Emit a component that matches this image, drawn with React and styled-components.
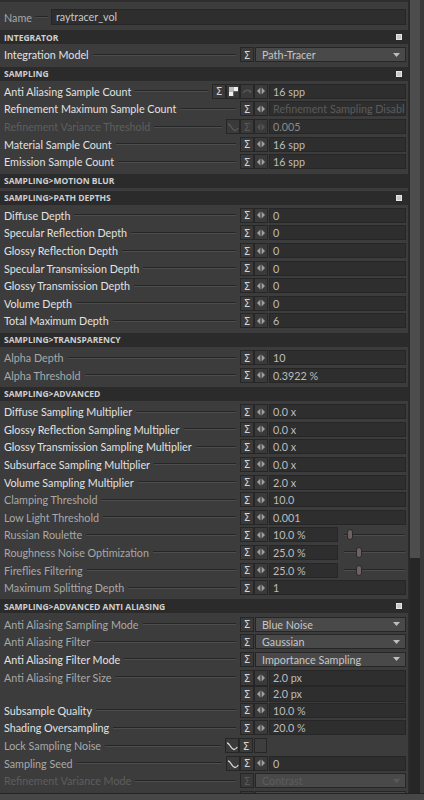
import React from 'react';
import styled, { createGlobalStyle } from 'styled-components';

const GlobalStyle = createGlobalStyle`
  html, body {
    margin: 0;
    padding: 0;
    background: #3c3c3c;
  }
  body {
    font-family: Lato, "Open Sans", sans-serif;
  }
`;

const tones = {
  bright: '#e2e2e2',
  mid: '#a9a9a9',
  dim: '#5e5e5e',
};

const valueTones = {
  normal: '#bdbdbd',
  soft: '#8a8a8a',
  dim: '#5b5b5b',
};

const Window = styled.div`
  width: 424px;
  height: 800px;
  display: flex;
  flex-direction: column;
  overflow: hidden;
`;

const Main = styled.div`
  display: flex;
  height: 794px;
  overflow: hidden;
`;

const Panel = styled.div`
  width: 408px;
  flex: none;
  box-sizing: border-box;
  background: #3c3c3c;
  border-top: 2px solid #2e2e2e;
  padding: 5px 2px 0 0;
`;

const ScrollTrack = styled.div`
  width: 16px;
  flex: none;
  box-sizing: border-box;
  background: #262626;
  border-left: 2px solid #2a2a2a;
  border-right: 4px solid #393939;
`;

const ScrollThumb = styled.div`
  height: 558px;
  background: #4d4d4d;
`;

const BottomBar = styled.div`
  height: 6px;
  background: #474747;
  border-top: 1px solid #232323;
`;

const NameRow = styled.div`
  display: flex;
  align-items: center;
  height: 20px;
  padding-left: 4px;
`;

const NameLabel = styled.span`
  font-size: 10.75px;
  color: #a8a8a8;
`;

const NameLeader = styled.div`
  width: 13px;
  margin: 0 3px;
  border-top: 1px solid #262626;
  border-bottom: 1px solid #4d4d4d;
`;

const NameInput = styled.div`
  flex: 1;
  height: 16px;
  box-sizing: border-box;
  border: 1px solid #262626;
  background: #2e2e2e;
  padding-left: 4px;
  font-size: 10.75px;
  line-height: 14px;
  color: #c8c8c8;
`;

const Header = styled.div`
  height: 14px;
  margin: 3px -2px 2px 0;
  padding: 0 6px 0 4px;
  background: #2b2b2b;
  display: flex;
  align-items: center;
  justify-content: space-between;
  font-family: "Open Sans", sans-serif;
  font-weight: 700;
  font-size: 8.5px;
  color: #d0d0d0;
  text-transform: uppercase;
`;

const Toggle = styled.span`
  width: 6px;
  height: 6px;
  box-sizing: border-box;
  background: #c9c9c9;
  border: 1px solid #e6e6e6;
`;

const Row = styled.div`
  display: flex;
  align-items: flex-start;
  min-height: 17.6px;
`;

const LabelArea = styled.div`
  flex: 1;
  min-width: 0;
  height: 17.6px;
  display: flex;
  align-items: center;
  padding-left: 4px;
`;

const Label = styled.span`
  font-size: 10.75px;
  white-space: nowrap;
  color: ${({ $tone }) => tones[$tone]};
`;

const Leader = styled.div`
  flex: 1;
  margin: 0 4px 0 4px;
  border-top: 1px solid #262626;
  border-bottom: 1px solid #4d4d4d;
`;

const Controls = styled.div`
  display: flex;
  flex-direction: column;
  padding-top: 1.3px;
`;

const Line = styled.div`
  display: flex;
  height: ${({ $tall }) => ($tall ? 16 : 15)}px;
`;

const Btn = styled.div`
  width: 14px;
  height: 100%;
  box-sizing: border-box;
  border: 1px solid #262626;
  background: #3a3a3a;
  display: flex;
  align-items: center;
  justify-content: center;
  font-family: "DejaVu Sans", sans-serif;
  font-size: 10.5px;
  color: ${({ $dim }) => ($dim ? '#5a5a5a' : '#d4d4d4')};
`;

const Value = styled.div`
  width: ${({ $w }) => $w}px;
  margin-left: 1px;
  box-sizing: border-box;
  border: 1px solid #262626;
  background: #2e2e2e;
  padding-left: 3px;
  font-size: 10.75px;
  line-height: 13px;
  white-space: nowrap;
  overflow: hidden;
  color: ${({ $tone }) => valueTones[$tone || 'normal']};
`;

const Drop = styled.div`
  width: 151px;
  margin-left: 1px;
  box-sizing: border-box;
  border: 1px solid #262626;
  background: #494949;
  padding: 0 5px 0 6px;
  display: flex;
  align-items: center;
  justify-content: space-between;
  font-size: 10.75px;
  white-space: nowrap;
  color: ${({ $dim }) => ($dim ? '#5c5c5c' : '#c6c6c6')};
`;

const Check = styled.div`
  width: 13px;
  margin-left: 1px;
  box-sizing: border-box;
  border: 1px solid #262626;
  background: #3e3e3e;
`;

const Spacer = styled.div`
  width: ${({ $w }) => $w}px;
`;

const Slider = styled.div`
  position: relative;
  width: 68px;
  display: flex;
  align-items: center;
`;

const Track = styled.div`
  flex: 1;
  margin: 0 1px 0 6px;
  border-top: 1px solid #262626;
  border-bottom: 1px solid #4d4d4d;
`;

const Thumb = styled.div`
  position: absolute;
  top: 2px;
  width: 6px;
  height: 11px;
  box-sizing: border-box;
  border-radius: 3px;
  border: 1px solid #2a2a2a;
  background: #6e6262;
`;

const Sigma = ({ dim }) => <Btn $dim={dim}>Σ</Btn>;

const Arrows = ({ dim }) => (
  <Btn>
    <svg width="8" height="8" viewBox="0 0 8 8">
      <g fill={dim ? '#555' : '#a0a0a0'}>
        <polygon points="0,4 3.4,0.6 3.4,7.4" />
        <polygon points="4.6,0.6 8,4 4.6,7.4" />
      </g>
    </svg>
  </Btn>
);

const Curve = ({ dim }) => (
  <Btn>
    <svg width="12" height="11" viewBox="0 0 12 11">
      <path
        d="M1 3 C3.5 2.5 5 9.5 8 9.5 C9.5 9.5 10.3 8.5 11.3 7"
        fill="none"
        stroke={dim ? '#5a5a5a' : '#d8d8d8'}
        strokeWidth="1.3"
      />
    </svg>
  </Btn>
);

const Checker = () => (
  <Btn>
    <svg width="9" height="9" viewBox="0 0 9 9">
      <rect x="0" y="0" width="4.5" height="4.5" fill="#bdbdbd" />
      <rect x="4.5" y="0" width="4.5" height="4.5" fill="#f0f0f0" />
      <rect x="0" y="4.5" width="4.5" height="4.5" fill="#f0f0f0" />
      <rect x="4.5" y="4.5" width="4.5" height="4.5" fill="#3a3a3a" />
    </svg>
  </Btn>
);

const Arc = () => (
  <Btn>
    <svg width="10" height="8" viewBox="0 0 10 8">
      <path d="M1 6 Q4 1.5 8 4" fill="none" stroke="#5a5a5a" strokeWidth="1.3" />
      <polygon points="6.5,5.5 9.5,5.5 8.5,2.5" fill="#5a5a5a" />
    </svg>
  </Btn>
);

const DropArrow = ({ dim }) => (
  <svg width="7" height="4" viewBox="0 0 7 4">
    <polygon points="0,0 7,0 3.5,4" fill={dim ? '#5a5a5a' : '#bdbdbd'} />
  </svg>
);

const buttonIcons = {
  sigma: Sigma,
  arrows: Arrows,
  checker: Checker,
  arc: Arc,
  curve: Curve,
};

const sections = [
  {
    title: 'Integrator',
    toggle: true,
    rows: [{ label: 'Integration Model', tone: 'bright', kind: 'drop', value: 'Path-Tracer' }],
  },
  {
    title: 'Sampling',
    toggle: true,
    rows: [
      {
        label: 'Anti Aliasing Sample Count',
        tone: 'bright',
        value: '16 spp',
        buttons: ['sigma', 'checker', 'arc', 'arrows'],
      },
      {
        label: 'Refinement Maximum Sample Count',
        tone: 'bright',
        value: 'Refinement Sampling Disabled',
        valueTone: 'dim',
      },
      {
        label: 'Refinement Variance Threshold',
        tone: 'dim',
        value: '0.005',
        valueTone: 'soft',
        buttons: ['curve', 'sigma', 'arrows'],
        dim: true,
      },
      { label: 'Material Sample Count', tone: 'bright', value: '16 spp' },
      { label: 'Emission Sample Count', tone: 'bright', value: '16 spp' },
    ],
  },
  { title: 'Sampling>Motion Blur', rows: [] },
  {
    title: 'Sampling>Path Depths',
    toggle: true,
    rows: [
      { label: 'Diffuse Depth', tone: 'bright', value: '0' },
      { label: 'Specular Reflection Depth', tone: 'bright', value: '0' },
      { label: 'Glossy Reflection Depth', tone: 'bright', value: '0' },
      { label: 'Specular Transmission Depth', tone: 'bright', value: '0' },
      { label: 'Glossy Transmission Depth', tone: 'bright', value: '0' },
      { label: 'Volume Depth', tone: 'bright', value: '0' },
      { label: 'Total Maximum Depth', tone: 'bright', value: '6' },
    ],
  },
  {
    title: 'Sampling>Transparency',
    rows: [
      { label: 'Alpha Depth', tone: 'mid', value: '10' },
      { label: 'Alpha Threshold', tone: 'mid', value: '0.3922 %' },
    ],
  },
  {
    title: 'Sampling>Advanced',
    rows: [
      { label: 'Diffuse Sampling Multiplier', tone: 'bright', value: '0.0 x' },
      { label: 'Glossy Reflection Sampling Multiplier', tone: 'bright', value: '0.0 x' },
      { label: 'Glossy Transmission Sampling Multiplier', tone: 'bright', value: '0.0 x' },
      { label: 'Subsurface Sampling Multiplier', tone: 'bright', value: '0.0 x' },
      { label: 'Volume Sampling Multiplier', tone: 'bright', value: '2.0 x' },
      { label: 'Clamping Threshold', tone: 'mid', value: '10.0' },
      { label: 'Low Light Threshold', tone: 'mid', value: '0.001' },
      { label: 'Russian Roulette', tone: 'mid', kind: 'slider', value: '10.0 %', pct: 0.1 },
      { label: 'Roughness Noise Optimization', tone: 'mid', kind: 'slider', value: '25.0 %', pct: 0.25 },
      { label: 'Fireflies Filtering', tone: 'mid', kind: 'slider', value: '25.0 %', pct: 0.25 },
      { label: 'Maximum Splitting Depth', tone: 'mid', value: '1' },
    ],
  },
  {
    title: 'Sampling>Advanced Anti Aliasing',
    toggle: true,
    rows: [
      { label: 'Anti Aliasing Sampling Mode', tone: 'mid', kind: 'drop', value: 'Blue Noise' },
      { label: 'Anti Aliasing Filter', tone: 'mid', kind: 'drop', value: 'Gaussian' },
      { label: 'Anti Aliasing Filter Mode', tone: 'bright', kind: 'drop', value: 'Importance Sampling' },
      { label: 'Anti Aliasing Filter Size', tone: 'mid', kind: 'double', values: ['2.0 px', '2.0 px'] },
      { label: 'Subsample Quality', tone: 'bright', value: '10.0 %' },
      { label: 'Shading Oversampling', tone: 'bright', value: '20.0 %' },
      { label: 'Lock Sampling Noise', tone: 'mid', kind: 'check', buttons: ['curve', 'sigma'] },
      { label: 'Sampling Seed', tone: 'mid', value: '0', buttons: ['curve', 'sigma', 'arrows'] },
      { label: 'Refinement Variance Mode', tone: 'dim', kind: 'drop', value: 'Contrast', dim: true },
      { label: '', tone: 'dim', kind: 'drop', value: '', dim: true },
    ],
  },
];

const Buttons = ({ names, dim }) =>
  names.map((name) => {
    const Icon = buttonIcons[name];
    return <Icon key={name} dim={dim} />;
  });

const RowControls = ({ row }) => {
  if (row.kind === 'drop') {
    return (
      <Controls>
        <Line>
          <Buttons names={row.buttons || ['sigma']} dim={row.dim} />
          <Drop $dim={row.dim}>
            <span>{row.value}</span>
            <DropArrow dim={row.dim} />
          </Drop>
        </Line>
      </Controls>
    );
  }

  if (row.kind === 'check') {
    return (
      <Controls>
        <Line>
          <Buttons names={row.buttons} />
          <Check />
          <Spacer $w={139} />
        </Line>
      </Controls>
    );
  }

  if (row.kind === 'double') {
    return (
      <Controls>
        {row.values.map((v, i) => (
          <Line key={i} $tall>
            <Buttons names={['sigma', 'arrows']} />
            <Value $w={137}>{v}</Value>
          </Line>
        ))}
      </Controls>
    );
  }

  if (row.kind === 'slider') {
    return (
      <Controls>
        <Line>
          <Buttons names={['sigma', 'arrows']} />
          <Value $w={69}>{row.value}</Value>
          <Slider>
            <Track />
            <Thumb style={{ left: `${6 + row.pct * 61 - 3}px` }} />
          </Slider>
        </Line>
      </Controls>
    );
  }

  return (
    <Controls>
      <Line>
        <Buttons names={row.buttons || ['sigma', 'arrows']} dim={row.dim} />
        <Value $w={137} $tone={row.valueTone}>
          {row.value}
        </Value>
      </Line>
    </Controls>
  );
};

const PropRow = ({ row }) => (
  <Row>
    <LabelArea>
      <Label $tone={row.tone}>{row.label}</Label>
      <Leader />
    </LabelArea>
    <RowControls row={row} />
  </Row>
);

const App = () => (
  <Window>
    <GlobalStyle />
    <Main>
      <Panel>
        <NameRow>
          <NameLabel>Name</NameLabel>
          <NameLeader />
          <NameInput>raytracer_vol</NameInput>
        </NameRow>
        {sections.map((section) => (
          <React.Fragment key={section.title}>
            <Header>
              <span>{section.title}</span>
              {section.toggle && <Toggle />}
            </Header>
            {section.rows.map((row, i) => (
              <PropRow key={i} row={row} />
            ))}
          </React.Fragment>
        ))}
      </Panel>
      <ScrollTrack>
        <ScrollThumb />
      </ScrollTrack>
    </Main>
    <BottomBar />
  </Window>
);

export default App;
